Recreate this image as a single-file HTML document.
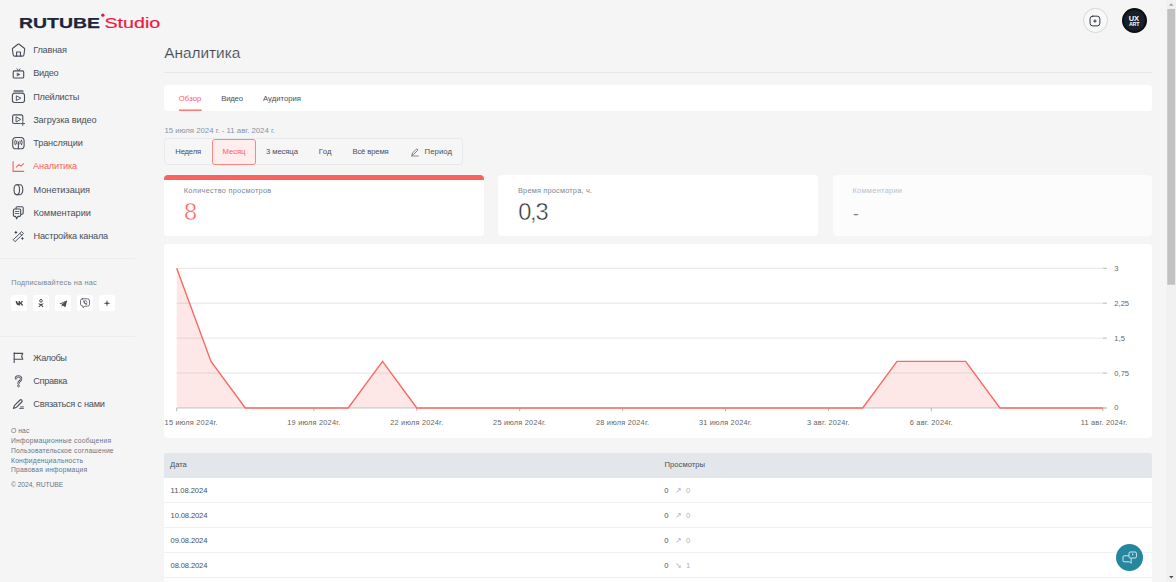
<!DOCTYPE html>
<html lang="ru">
<head>
<meta charset="utf-8">
<title>RUTUBE Studio — Аналитика</title>
<style>
html,body{margin:0;padding:0;}
body{width:1176px;height:582px;overflow:hidden;background:#f5f5f5;font-family:"Liberation Sans",sans-serif;position:relative;}
.t{position:absolute;white-space:nowrap;line-height:1;}
.b{position:absolute;box-sizing:border-box;}
.card{background:#fff;border-radius:4px;}
svg{position:absolute;overflow:visible;}
.chart{left:0;top:0;}
.cl{font-family:"Liberation Sans",sans-serif;font-size:7.35px;fill:#666;letter-spacing:.22px;}
.ic{fill:none;stroke:#474e59;stroke-width:1.1;stroke-linecap:round;stroke-linejoin:round;}
.soc{position:absolute;width:16px;height:16px;top:295.2px;background:#fff;border-radius:2.5px;}
</style>
</head>
<body>
<!-- ===== boxes ===== -->
<div class="b" style="left:0;top:258px;width:135px;height:1px;background:#ebedf1"></div>
<div class="b" style="left:0;top:335.6px;width:135px;height:1px;background:#ebedf1"></div>
<div class="b" style="left:164.3px;top:71.8px;width:987.5px;height:1px;background:#e6e8ee"></div>
<!-- tabs card -->
<div class="b card" style="left:164.3px;top:85px;width:987.5px;height:26px;border-radius:3.5px"></div>
<svg width="30" height="3" style="left:178.8px;top:109px" viewBox="0 0 30 3"><rect x="0" y=".5" width="22.7" height="1.4" fill="#fa6c67"/></svg>
<!-- period group -->
<div class="b" style="left:164.3px;top:138.2px;width:298.4px;height:27px;border:1px solid #e7e9ed;border-radius:3.5px;background:#f6f6f6"></div>
<div class="b" style="left:212px;top:139px;width:43.7px;height:25.7px;border:1px solid #fa8783;border-radius:3px;background:#ffeeed"></div>
<!-- stat cards -->
<div class="b card" style="left:164.3px;top:174.8px;width:319.4px;height:61.2px;border-top:5.2px solid #fb625e"></div>
<div class="b card" style="left:498.4px;top:175.3px;width:319.4px;height:60.7px"></div>
<div class="b card" style="left:833px;top:175.3px;width:318.8px;height:60.7px;background:#fcfcfc"></div>
<!-- chart card -->
<div class="b card" style="left:164.3px;top:243.8px;width:987.5px;height:194px"></div>
<!-- table -->
<div class="b" style="left:164.3px;top:453.2px;width:987.5px;height:24.4px;background:#e3e6ea;border-radius:2.5px 2.5px 0 0"></div>
<div class="b" style="left:164.3px;top:477.6px;width:987.5px;height:104.4px;background:#fff"></div>
<div class="b" style="left:164.3px;top:502.1px;width:987.5px;height:1px;background:#f1f2f5"></div>
<div class="b" style="left:164.3px;top:527.2px;width:987.5px;height:1px;background:#f1f2f5"></div>
<div class="b" style="left:164.3px;top:552.3px;width:987.5px;height:1px;background:#f1f2f5"></div>
<div class="b" style="left:164.3px;top:577.3px;width:987.5px;height:1px;background:#f1f2f5"></div>
<!-- scrollbar -->
<svg width="12" height="582" style="left:1164px;top:0" viewBox="0 0 12 582"><rect x="2.35" y="0" width="9.65" height="582" fill="#f1f1f1"/><rect x="3.25" y="8.9" width="7.9" height="275.8" fill="#c1c1c1"/></svg>
<svg width="10" height="10" style="left:1166.2px;top:0" viewBox="0 0 10 10"><path d="M2.9 5.7 L5.2 3.2 L7.5 5.7Z" fill="#a3a3a3"/></svg>
<svg width="10" height="10" style="left:1166.2px;top:572px" viewBox="0 0 10 10"><path d="M3.1 4.1 L5.3 6.4 L7.5 4.1Z" fill="#505050"/></svg>

<svg class="chart" width="1176" height="582" viewBox="0 0 1176 582">
<line x1="176.7" y1="408.00" x2="1106.6" y2="408.00" stroke="#dedede" stroke-width="0.8"/>
<line x1="176.7" y1="373.07" x2="1106.6" y2="373.07" stroke="#dedede" stroke-width="0.8"/>
<line x1="176.7" y1="338.15" x2="1106.6" y2="338.15" stroke="#dedede" stroke-width="0.8"/>
<line x1="176.7" y1="303.23" x2="1106.6" y2="303.23" stroke="#dedede" stroke-width="0.8"/>
<line x1="176.7" y1="268.30" x2="1106.6" y2="268.30" stroke="#dedede" stroke-width="0.8"/>
<line x1="176.7" y1="408.00" x2="1106.6" y2="408.00" stroke="#c9c9c9" stroke-width="0.7"/>
<line x1="176.7" y1="408.0" x2="176.7" y2="411.2" stroke="#9a9a9a" stroke-width="0.7"/>
<line x1="313.9" y1="408.0" x2="313.9" y2="411.2" stroke="#9a9a9a" stroke-width="0.7"/>
<line x1="416.8" y1="408.0" x2="416.8" y2="411.2" stroke="#9a9a9a" stroke-width="0.7"/>
<line x1="519.7" y1="408.0" x2="519.7" y2="411.2" stroke="#9a9a9a" stroke-width="0.7"/>
<line x1="622.6" y1="408.0" x2="622.6" y2="411.2" stroke="#9a9a9a" stroke-width="0.7"/>
<line x1="725.5" y1="408.0" x2="725.5" y2="411.2" stroke="#9a9a9a" stroke-width="0.7"/>
<line x1="828.4" y1="408.0" x2="828.4" y2="411.2" stroke="#9a9a9a" stroke-width="0.7"/>
<line x1="931.3" y1="408.0" x2="931.3" y2="411.2" stroke="#9a9a9a" stroke-width="0.7"/>
<line x1="1102.8" y1="408.0" x2="1102.8" y2="411.2" stroke="#9a9a9a" stroke-width="0.7"/>
<polygon points="176.7,408.0 176.7,268.3 211.0,361.4 245.3,408.0 279.6,408.0 313.9,408.0 348.2,408.0 382.5,361.4 416.8,408.0 451.1,408.0 485.4,408.0 519.7,408.0 554.0,408.0 588.3,408.0 622.6,408.0 656.9,408.0 691.2,408.0 725.5,408.0 759.8,408.0 794.1,408.0 828.4,408.0 862.7,408.0 897.0,361.4 931.3,361.4 965.6,361.4 999.9,408.0 1034.2,408.0 1068.5,408.0 1102.8,408.0 1102.8,408.0" fill="#f9605b" fill-opacity="0.145"/>
<polyline points="176.7,268.3 211.0,361.4 245.3,408.0 279.6,408.0 313.9,408.0 348.2,408.0 382.5,361.4 416.8,408.0 451.1,408.0 485.4,408.0 519.7,408.0 554.0,408.0 588.3,408.0 622.6,408.0 656.9,408.0 691.2,408.0 725.5,408.0 759.8,408.0 794.1,408.0 828.4,408.0 862.7,408.0 897.0,361.4 931.3,361.4 965.6,361.4 999.9,408.0 1034.2,408.0 1068.5,408.0 1102.8,408.0" fill="none" stroke="#fa6864" stroke-width="1.4" stroke-linejoin="miter"/>
<text x="164.6" y="424.8" class="cl" text-anchor="start">15 июля 2024г.</text>
<text x="313.9" y="424.8" class="cl" text-anchor="middle">19 июля 2024г.</text>
<text x="416.8" y="424.8" class="cl" text-anchor="middle">22 июля 2024г.</text>
<text x="519.7" y="424.8" class="cl" text-anchor="middle">25 июля 2024г.</text>
<text x="622.6" y="424.8" class="cl" text-anchor="middle">28 июля 2024г.</text>
<text x="725.5" y="424.8" class="cl" text-anchor="middle">31 июля 2024г.</text>
<text x="828.4" y="424.8" class="cl" text-anchor="middle">3 авг. 2024г.</text>
<text x="931.3" y="424.8" class="cl" text-anchor="middle">6 авг. 2024г.</text>
<text x="1127.4" y="424.8" class="cl" text-anchor="end">11 авг. 2024г.</text>
<text x="1114.3" y="410.4" class="cl" style="letter-spacing:0;font-size:7.6px" text-anchor="start">0</text>
<line x1="1102.9" y1="408.00" x2="1107" y2="408.00" stroke="#b9b9b9" stroke-width="0.8"/>
<text x="1114.3" y="375.5" class="cl" style="letter-spacing:0;font-size:7.6px" text-anchor="start">0,75</text>
<line x1="1102.9" y1="373.07" x2="1107" y2="373.07" stroke="#b9b9b9" stroke-width="0.8"/>
<text x="1114.3" y="340.5" class="cl" style="letter-spacing:0;font-size:7.6px" text-anchor="start">1,5</text>
<line x1="1102.9" y1="338.15" x2="1107" y2="338.15" stroke="#b9b9b9" stroke-width="0.8"/>
<text x="1114.3" y="305.6" class="cl" style="letter-spacing:0;font-size:7.6px" text-anchor="start">2,25</text>
<line x1="1102.9" y1="303.23" x2="1107" y2="303.23" stroke="#b9b9b9" stroke-width="0.8"/>
<text x="1114.3" y="270.7" class="cl" style="letter-spacing:0;font-size:7.6px" text-anchor="start">3</text>
<line x1="1102.9" y1="268.30" x2="1107" y2="268.30" stroke="#b9b9b9" stroke-width="0.8"/>
</svg>

<!-- ===== logo ===== -->
<svg width="170" height="40" style="left:0;top:0" viewBox="0 0 170 40">
<text x="19" y="28.4" font-family="Liberation Sans, sans-serif" font-weight="700" font-size="15.1" fill="#1d2639" stroke="#1d2639" stroke-width="0.25" textLength="80.9" lengthAdjust="spacingAndGlyphs">RUTUBE</text>
<circle cx="102.8" cy="15.2" r="1.65" fill="#ed143b"/>
<text x="104.5" y="28.4" font-family="Liberation Sans, sans-serif" font-weight="400" font-size="15" fill="#ee1a40" stroke="#ee1a40" stroke-width="0.2" textLength="55.8" lengthAdjust="spacingAndGlyphs">Studio</text>
</svg>

<!-- ===== top right ===== -->
<div class="b" style="left:1082.9px;top:8.1px;width:24.8px;height:24.8px;border:1px solid #cfd8e3;border-radius:50%;background:#f8f8f8"></div>
<svg width="12" height="12" style="left:1089.3px;top:14.7px" viewBox="0 0 12 12"><rect x="1.05" y="1.15" width="9.8" height="9.75" rx="2.7" class="ic" style="stroke:#2f3743;stroke-width:1"/><path d="M5.95 4.8v2.5M4.7 6.05h2.5" class="ic" style="stroke:#2f3743;stroke-width:1"/></svg>
<div class="b" style="left:1122px;top:8.2px;width:24.9px;height:24.9px;border-radius:50%;background:#17202b;border:2.9px solid #0e0e10"></div>
<div class="t" style="left:1128.7px;top:14.8px;font-size:7.5px;font-weight:700;color:#fff;letter-spacing:-0.1px">UX</div>
<div class="t" style="left:1128.9px;top:22.3px;font-size:5.3px;font-weight:700;color:#fff;letter-spacing:-0.1px">ART</div>

<!-- chat button -->
<div class="b" style="left:1115.8px;top:543.9px;width:27.3px;height:27.3px;border-radius:50%;background:#24879e"></div>
<svg width="16" height="14" style="left:1121.5px;top:550.5px" viewBox="0 0 16 14"><g fill="none" stroke="#e8f4f7" stroke-width="0.9" stroke-linejoin="round"><rect x="7" y="1" width="7.4" height="6" rx="1.2" fill="#24879e"/><path d="M6.8 4.8H2.2a1.2 1.2 0 0 0-1.2 1.2v3.6a1.2 1.2 0 0 0 1.2 1.2h5.3l1.6 1.6v-5"/></g><rect x="10.2" y="2.6" width="1" height="1.8" fill="#e8f4f7"/></svg>

<!-- social boxes -->
<div class="soc" style="left:11px"></div><div class="soc" style="left:33px"></div><div class="soc" style="left:55px"></div><div class="soc" style="left:77px"></div><div class="soc" style="left:99px"></div>
<!-- ===== sidebar icons ===== -->
<svg width="1176" height="582" style="left:0;top:0" viewBox="0 0 1176 582">
<g class="ic">
<!-- home -->
<path d="M17.9 44.3 Q18.55 43.8 19.2 44.3 L24.3 48.2 Q24.8 48.6 24.7 49.3 L23.9 55 Q23.7 56.1 22.6 56.1 H14.5 Q13.4 56.1 13.2 55 L12.4 49.3 Q12.3 48.6 12.8 48.2 Z"/>
<path d="M16.6 56 V52 H20.5 V56"/>
<!-- video (tv) -->
<rect x="13.2" y="70.9" width="10.5" height="7.1" rx="1.1"/>
<path d="M17 68.7 L18.5 70.6 L20.1 68.7" stroke-width=".9"/>
<path d="M17.3 73.1 L20 74.5 L17.3 75.9Z" fill="#474e59" stroke-width=".4"/>
<!-- playlists -->
<rect x="12.4" y="93.3" width="12.1" height="9.2" rx="2.2"/>
<path d="M16.7 96 L20.9 98.1 L16.7 100.3Z" stroke-width=".9"/>
<!-- upload video -->
<path d="M20.100 123.500 H14.200 Q12.600 123.500 12.600 121.900 V116.500 Q12.600 114.900 14.200 114.900 H21.200 Q22.800 114.900 22.800 116.500 V120.700"/>
<path d="M16.400 117 L20.800 119.400 L16.400 121.800Z" stroke-width=".95"/>
<path d="M22.8 121.800 V125.400 M21 123.600 H24.600" stroke-width=".95"/>
<!-- broadcast -->
<rect x="12.7" y="137.5" width="11.4" height="11.3" rx="3.4"/>
<path d="M18.4 143 V148.700" stroke-width="1.05"/>
<circle cx="18.4" cy="142.4" r=".8" fill="#474e59" stroke="none"/>
<path d="M16.8 140.900 Q16 142.4 16.8 144 M20 140.900 Q20.8 142.4 20 144 M15.2 140.100 Q14.1 142.4 15.2 144.800 M21.600 140.100 Q22.700 142.4 21.600 144.800" stroke-width="1"/>
<!-- monetization -->
<ellipse cx="16.800" cy="189.750" rx="2.750" ry="4.950"/>
<path d="M16.800 184.800 H20 A2.800 4.950 0 0 1 20 194.700 H16.800"/>
<!-- comments -->
<path d="M16 208.700 V207.900 Q16 206.700 17.200 206.700 H22 Q23.200 206.700 23.200 207.900 V213.100 Q23.200 214.300 22 214.300 H21.300"/>
<path d="M14.600 209 H19.500 Q20.700 209 20.700 210.200 V215.200 Q20.700 216.400 19.500 216.400 H18 L16.600 218.800 L15.600 216.400 H14.600 Q13.400 216.400 13.400 215.200 V210.200 Q13.400 209 14.600 209Z"/>
<path d="M15.200 211.500 H18.900 M15.200 213.500 H18.900" stroke-width=".85"/>
<!-- settings wand -->
<path d="M13.5 239.5 L21.7 231.6 L23.5 233.500 L15.3 241.400Z M19.900 233.300 L21.800 235.200" stroke-width=".95"/>
<!-- flag -->
<path d="M14.2 352.8 V362.4"/>
<path d="M14.2 353.4 H22.8 L21.6 356.3 L22.8 359.3 H14.2"/>
<!-- contact pencil -->
<path d="M13.4 408.4 L14.6 405.3 L20 400 Q20.9 399.3 21.7 400.1 L21.9 400.3 Q22.6 401.2 21.8 402 L16.6 407.2 Z"/>
<path d="M19.6 408.4 H23.4 M20.6 406.9 H23.4" stroke-width=".9"/>
</g>
<!-- playlists top bar -->
<path d="M13.8 90 H23.2 L23.8 92.6 H13.2Z" fill="#7f8792"/>
<!-- wand sparkles -->
<path d="M15.90 230.80 L16.51 231.79 L17.50 232.40 L16.51 233.01 L15.90 234.00 L15.29 233.01 L14.30 232.40 L15.29 231.79Z M22.40 236.90 L23.01 237.89 L24.00 238.50 L23.01 239.11 L22.40 240.10 L21.79 239.11 L20.80 238.50 L21.79 237.89Z" fill="#2f3743"/>
<!-- analytics (active) -->
<g fill="none" stroke="#f9605b" stroke-width="1.1" stroke-linecap="round" stroke-linejoin="round">
<path d="M13.1 161.5 V171.4 H23.7"/>
<path d="M16.4 167.2 L18.9 164.6 L21 166.2 L23.6 163.7" stroke-width="1.05"/>
</g>
<!-- question -->
<g fill="none" stroke-linecap="round" stroke-linejoin="round">
<path d="M15.9 378.6 Q15.9 376.3 18.4 376.3 Q21.1 376.3 21.1 378.7 Q21.1 380.3 19.6 381.2 Q18.5 381.9 18.5 383.6" stroke="#474e59" stroke-width="2.3"/>
<path d="M15.9 378.6 Q15.9 376.3 18.4 376.3 Q21.1 376.3 21.1 378.7 Q21.1 380.3 19.6 381.2 Q18.5 381.9 18.5 383.6" stroke="#f5f5f5" stroke-width=".7"/>
</g>
<circle cx="18.5" cy="386" r=".95" fill="#f5f5f5" stroke="#474e59" stroke-width=".8"/>
<!-- period pencil -->
<g fill="none" stroke="#5a6472" stroke-width=".8" stroke-linecap="round" stroke-linejoin="round">
<path d="M411.9 155.1 L412.6 152.9 L416.3 149.2 Q416.9 148.7 417.5 149.3 Q418.1 149.9 417.5 150.5 L413.9 154.2Z"/>
<path d="M411.5 156 H418.4" stroke-width=".7"/>
</g>
<!-- social icons -->
<g fill="#474e59">
<!-- vk -->
<path d="M15.6 300.9 h1.5 q.3 1.9 1.5 2.4 v-2.4 h1.4 v1.5 q1.1-.3 1.6-1.5 h1.4 q-.5 1.5-1.6 2.2 q1.3 .7 1.9 2.3 h-1.6 q-.5-1.2-1.7-1.5 v1.5 h-.5 q-3.400 0-3.900-4.500z"/>
<!-- ok -->
<circle cx="41" cy="300.8" r="1.35" fill="none" stroke="#474e59" stroke-width="1"/>
<path d="M38.900 303.300 q2.100 1.300 4.200 0 l.5 .8 q-.8 .6-1.700 .8 l1.600 1.700 -.8 .7 -1.700-1.800 -1.700 1.800 -.8-.7 1.600-1.700 q-.9-.2-1.700-.8z"/>
<!-- telegram -->
<path d="M59.400 303.700 l7.200-3.100 q.5-.1 .4 .5 l-1.300 5.500 q-.2 .6-.8 .3 l-2-1.500 -1 1 q-.3 .2-.3-.2 l.1-1.600 3.500-3.100 -4.300 2.700 -1.500-.5 q-.500-.2 0-.5z"/>
<!-- plus star -->
<path d="M107 299.700 L107.700 302.500 L110.500 303.200 L107.700 303.900 L107 306.700 L106.300 303.900 L103.500 303.200 L106.300 302.500Z"/>
</g>
<!-- viber -->
<g fill="none" stroke="#474e59" stroke-width=".8" stroke-linecap="round" stroke-linejoin="round">
<path d="M82.600 298.800 h4.800 q2.100 0 2.100 2.100 v3.200 q0 2.100-2.100 2.100 h-2.600 l-1.700 1.600 v-1.700 q-2.600-.2-2.600-2 v-3.200 q0-2.100 2.100-2.100z"/>
<path d="M83.500 300.800 q-.3 2.600 3 3.900 l.7-.8 -1-.8 -.5 .4 q-.9-.5-1.200-1.400 l.4-.4 -.7-1.100z" fill="#474e59" stroke-width=".3"/>
<path d="M85.300 300.400 q1.700 .1 1.800 1.800" stroke-width=".6"/>
</g>
</svg>



<!-- ===== texts ===== -->
<div class="t" style="left:33.20px;top:46.22px;font-size:9.19px;color:#49505b;letter-spacing:-0.196px;">Главная</div>
<div class="t" style="left:33.20px;top:69.45px;font-size:9.19px;color:#49505b;letter-spacing:-0.337px;">Видео</div>
<div class="t" style="left:33.20px;top:92.67px;font-size:9.19px;color:#49505b;letter-spacing:-0.227px;">Плейлисты</div>
<div class="t" style="left:33.20px;top:115.90px;font-size:9.19px;color:#49505b;letter-spacing:-0.132px;">Загрузка видео</div>
<div class="t" style="left:33.20px;top:139.12px;font-size:9.19px;color:#49505b;letter-spacing:-0.118px;">Трансляции</div>
<div class="t" style="left:33.00px;top:162.35px;font-size:9.19px;color:#f9605b;letter-spacing:-0.149px;">Аналитика</div>
<div class="t" style="left:33.50px;top:185.57px;font-size:9.19px;color:#49505b;letter-spacing:-0.009px;">Монетизация</div>
<div class="t" style="left:33.50px;top:208.80px;font-size:9.19px;color:#49505b;letter-spacing:-0.038px;">Комментарии</div>
<div class="t" style="left:33.50px;top:232.02px;font-size:9.19px;color:#49505b;letter-spacing:-0.199px;">Настройка канала</div>
<div class="t" style="left:33.00px;top:353.52px;font-size:9.19px;color:#49505b;letter-spacing:-0.429px;">Жалобы</div>
<div class="t" style="left:33.30px;top:376.92px;font-size:9.19px;color:#49505b;letter-spacing:-0.309px;">Справка</div>
<div class="t" style="left:33.30px;top:400.22px;font-size:9.19px;color:#49505b;letter-spacing:-0.248px;">Связаться с нами</div>
<div class="t" style="left:11.20px;top:279.28px;font-size:7.35px;color:#7b8794;letter-spacing:0.206px;">Подписывайтесь на нас</div>
<div class="t" style="left:11.00px;top:428.09px;font-size:6.74px;color:#6b7684;letter-spacing:0.086px;">О нас</div>
<div class="t" style="left:11.00px;top:437.89px;font-size:6.74px;color:#6b7684;letter-spacing:0.255px;">Информационные сообщения</div>
<div class="t" style="left:11.00px;top:447.69px;font-size:6.74px;color:#6b7684;letter-spacing:0.216px;">Пользовательское соглашение</div>
<div class="t" style="left:11.00px;top:457.99px;font-size:6.74px;color:#6b7684;letter-spacing:0.214px;">Конфиденциальность</div>
<div class="t" style="left:11.00px;top:467.29px;font-size:6.74px;color:#6b7684;letter-spacing:0.208px;">Правовая информация</div>
<div class="t" style="left:11.00px;top:481.79px;font-size:6.74px;color:#6b7684;letter-spacing:-0.084px;">© 2024, RUTUBE</div>
<div class="t" style="left:164.30px;top:45.36px;font-size:15.40px;color:#414853;letter-spacing:-0.028px;-webkit-text-stroke:0.15px #f5f5f5;">Аналитика</div>
<div class="t" style="left:178.80px;top:94.88px;font-size:7.70px;color:#f9605b;letter-spacing:0.065px;">Обзор</div>
<div class="t" style="left:221.30px;top:94.88px;font-size:7.70px;color:#49505b;letter-spacing:-0.199px;">Видео</div>
<div class="t" style="left:263.00px;top:94.88px;font-size:7.70px;color:#49505b;letter-spacing:0.011px;">Аудитория</div>
<div class="t" style="left:164.50px;top:127.20px;font-size:7.80px;color:#8794a7;letter-spacing:-0.012px;">15 июля 2024 г. - 11 авг. 2024 г.</div>
<div class="t" style="left:175.30px;top:148.28px;font-size:7.70px;color:#49505b;letter-spacing:-0.191px;">Неделя</div>
<div class="t" style="left:222.50px;top:148.28px;font-size:7.70px;color:#f9605b;letter-spacing:-0.053px;">Месяц</div>
<div class="t" style="left:266.00px;top:148.28px;font-size:7.70px;color:#49505b;letter-spacing:-0.101px;">3 месяца</div>
<div class="t" style="left:318.70px;top:148.28px;font-size:7.70px;color:#49505b;letter-spacing:0.320px;">Год</div>
<div class="t" style="left:352.40px;top:148.28px;font-size:7.70px;color:#49505b;letter-spacing:-0.141px;">Всё время</div>
<div class="t" style="left:424.60px;top:148.28px;font-size:7.70px;color:#49505b;letter-spacing:0.079px;">Период</div>
<div class="t" style="left:183.80px;top:187.28px;font-size:7.35px;color:#7b8794;letter-spacing:0.287px;">Количество просмотров</div>
<div class="t" style="left:518.00px;top:187.28px;font-size:7.35px;color:#7b8794;letter-spacing:0.197px;">Время просмотра, ч.</div>
<div class="t" style="left:852.50px;top:187.28px;font-size:7.35px;color:#b8c0cc;letter-spacing:0.321px;">Комментарии</div>
<div class="t" style="left:852.90px;top:205.24px;font-size:17.20px;color:#7d838c;letter-spacing:0.000px;">-</div>
<div class="t" style="left:183.90px;top:200.52px;font-size:23.60px;color:#f9605b;letter-spacing:0.000px;-webkit-text-stroke:0.45px #fff;">8</div>
<div class="t" style="left:518.20px;top:200.52px;font-size:23.60px;color:#2c3440;letter-spacing:-1.204px;-webkit-text-stroke:0.45px #fff;">0,3</div>
<div class="t" style="left:170.10px;top:461.27px;font-size:7.60px;color:#49505b;letter-spacing:-0.076px;">Дата</div>
<div class="t" style="left:664.60px;top:461.27px;font-size:7.60px;color:#49505b;letter-spacing:0.041px;">Просмотры</div>
<div class="t" style="left:170.60px;top:486.57px;font-size:7.60px;color:#49505b;letter-spacing:-0.075px;">11.08.2024</div>
<div class="t" style="left:664.30px;top:486.57px;font-size:7.60px;color:#49505b;letter-spacing:0.000px;">0</div>
<div class="t" style="left:685.90px;top:486.57px;font-size:7.60px;color:#a9b3c0;letter-spacing:0.000px;">0</div>
<div class="t" style="left:674.90px;top:486.66px;font-size:8.20px;color:#aab4c1;letter-spacing:0.000px;font-family:"DejaVu Sans",sans-serif;">↗</div>
<div class="t" style="left:170.60px;top:511.67px;font-size:7.60px;color:#49505b;letter-spacing:-0.137px;">10.08.2024</div>
<div class="t" style="left:664.30px;top:511.67px;font-size:7.60px;color:#49505b;letter-spacing:0.000px;">0</div>
<div class="t" style="left:685.90px;top:511.67px;font-size:7.60px;color:#a9b3c0;letter-spacing:0.000px;">0</div>
<div class="t" style="left:674.90px;top:511.76px;font-size:8.20px;color:#aab4c1;letter-spacing:0.000px;font-family:"DejaVu Sans",sans-serif;">↗</div>
<div class="t" style="left:170.60px;top:536.77px;font-size:7.60px;color:#49505b;letter-spacing:-0.137px;">09.08.2024</div>
<div class="t" style="left:664.30px;top:536.77px;font-size:7.60px;color:#49505b;letter-spacing:0.000px;">0</div>
<div class="t" style="left:685.90px;top:536.77px;font-size:7.60px;color:#a9b3c0;letter-spacing:0.000px;">0</div>
<div class="t" style="left:674.90px;top:536.86px;font-size:8.20px;color:#aab4c1;letter-spacing:0.000px;font-family:"DejaVu Sans",sans-serif;">↗</div>
<div class="t" style="left:170.60px;top:561.87px;font-size:7.60px;color:#49505b;letter-spacing:-0.137px;">08.08.2024</div>
<div class="t" style="left:664.30px;top:561.87px;font-size:7.60px;color:#49505b;letter-spacing:0.000px;">0</div>
<div class="t" style="left:685.90px;top:561.87px;font-size:7.60px;color:#a9b3c0;letter-spacing:0.000px;">1</div>
<div class="t" style="left:674.90px;top:561.96px;font-size:8.20px;color:#aab4c1;letter-spacing:0.000px;font-family:"DejaVu Sans",sans-serif;">↘</div>
</body>
</html>
